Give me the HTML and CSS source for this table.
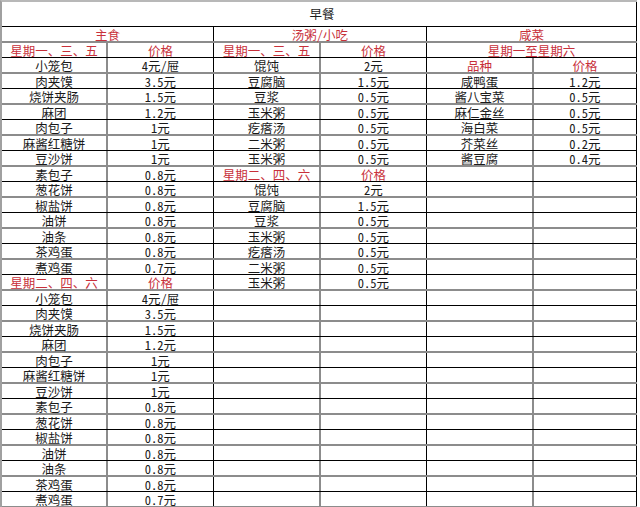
FILE: index.html
```html
<!DOCTYPE html>
<html lang="zh">
<head>
<meta charset="utf-8">
<title>早餐</title>
<link rel="stylesheet" href="styles.css">
</head>
<body>
<div class="sheet">
  <div class="title"><div class="cell end">早餐</div></div>

  <div class="row red"><div class="cell s2 end">主食</div><div class="cell s2 end">汤粥/小吃</div><div class="cell s2 end">咸菜</div></div>
  <div class="row red"><div class="cell">星期一、三、五</div><div class="cell">价格</div><div class="cell">星期一、三、五</div><div class="cell">价格</div><div class="cell s2 end">星期一至星期六</div></div>
  <div class="row"><div class="cell">小笼包</div><div class="cell">4元/屉</div><div class="cell">馄饨</div><div class="cell">2元</div><div class="cell r">品种</div><div class="cell r">价格</div></div>
  <div class="row"><div class="cell">肉夹馍</div><div class="cell">3.5元</div><div class="cell">豆腐脑</div><div class="cell">1.5元</div><div class="cell">咸鸭蛋</div><div class="cell">1.2元</div></div>
  <div class="row"><div class="cell">烧饼夹肠</div><div class="cell">1.5元</div><div class="cell">豆浆</div><div class="cell">0.5元</div><div class="cell">酱八宝菜</div><div class="cell">0.5元</div></div>
  <div class="row"><div class="cell">麻团</div><div class="cell">1.2元</div><div class="cell">玉米粥</div><div class="cell">0.5元</div><div class="cell">麻仁金丝</div><div class="cell">0.5元</div></div>
  <div class="row"><div class="cell">肉包子</div><div class="cell">1元</div><div class="cell">疙瘩汤</div><div class="cell">0.5元</div><div class="cell">海白菜</div><div class="cell">0.5元</div></div>
  <div class="row"><div class="cell">麻酱红糖饼</div><div class="cell">1元</div><div class="cell">二米粥</div><div class="cell">0.5元</div><div class="cell">芥菜丝</div><div class="cell">0.2元</div></div>
  <div class="row"><div class="cell">豆沙饼</div><div class="cell">1元</div><div class="cell">玉米粥</div><div class="cell">0.5元</div><div class="cell">酱豆腐</div><div class="cell">0.4元</div></div>
  <div class="row"><div class="cell">素包子</div><div class="cell">0.8元</div><div class="cell r">星期二、四、六</div><div class="cell r">价格</div><div class="cell"></div><div class="cell"></div></div>
  <div class="row"><div class="cell">葱花饼</div><div class="cell">0.8元</div><div class="cell">馄饨</div><div class="cell">2元</div><div class="cell"></div><div class="cell"></div></div>
  <div class="row"><div class="cell">椒盐饼</div><div class="cell">0.8元</div><div class="cell">豆腐脑</div><div class="cell">1.5元</div><div class="cell"></div><div class="cell"></div></div>
  <div class="row"><div class="cell">油饼</div><div class="cell">0.8元</div><div class="cell">豆浆</div><div class="cell">0.5元</div><div class="cell"></div><div class="cell"></div></div>
  <div class="row"><div class="cell">油条</div><div class="cell">0.8元</div><div class="cell">玉米粥</div><div class="cell">0.5元</div><div class="cell"></div><div class="cell"></div></div>
  <div class="row"><div class="cell">茶鸡蛋</div><div class="cell">0.8元</div><div class="cell">疙瘩汤</div><div class="cell">0.5元</div><div class="cell"></div><div class="cell"></div></div>
  <div class="row"><div class="cell">煮鸡蛋</div><div class="cell">0.7元</div><div class="cell">二米粥</div><div class="cell">0.5元</div><div class="cell"></div><div class="cell"></div></div>
  <div class="row"><div class="cell r">星期二、四、六</div><div class="cell r">价格</div><div class="cell">玉米粥</div><div class="cell">0.5元</div><div class="cell"></div><div class="cell"></div></div>
  <div class="row"><div class="cell">小笼包</div><div class="cell">4元/屉</div><div class="cell"></div><div class="cell"></div><div class="cell"></div><div class="cell"></div></div>
  <div class="row"><div class="cell">肉夹馍</div><div class="cell">3.5元</div><div class="cell"></div><div class="cell"></div><div class="cell"></div><div class="cell"></div></div>
  <div class="row"><div class="cell">烧饼夹肠</div><div class="cell">1.5元</div><div class="cell"></div><div class="cell"></div><div class="cell"></div><div class="cell"></div></div>
  <div class="row"><div class="cell">麻团</div><div class="cell">1.2元</div><div class="cell"></div><div class="cell"></div><div class="cell"></div><div class="cell"></div></div>
  <div class="row"><div class="cell">肉包子</div><div class="cell">1元</div><div class="cell"></div><div class="cell"></div><div class="cell"></div><div class="cell"></div></div>
  <div class="row"><div class="cell">麻酱红糖饼</div><div class="cell">1元</div><div class="cell"></div><div class="cell"></div><div class="cell"></div><div class="cell"></div></div>
  <div class="row"><div class="cell">豆沙饼</div><div class="cell">1元</div><div class="cell"></div><div class="cell"></div><div class="cell"></div><div class="cell"></div></div>
  <div class="row"><div class="cell">素包子</div><div class="cell">0.8元</div><div class="cell"></div><div class="cell"></div><div class="cell"></div><div class="cell"></div></div>
  <div class="row"><div class="cell">葱花饼</div><div class="cell">0.8元</div><div class="cell"></div><div class="cell"></div><div class="cell"></div><div class="cell"></div></div>
  <div class="row"><div class="cell">椒盐饼</div><div class="cell">0.8元</div><div class="cell"></div><div class="cell"></div><div class="cell"></div><div class="cell"></div></div>
  <div class="row"><div class="cell">油饼</div><div class="cell">0.8元</div><div class="cell"></div><div class="cell"></div><div class="cell"></div><div class="cell"></div></div>
  <div class="row"><div class="cell">油条</div><div class="cell">0.8元</div><div class="cell"></div><div class="cell"></div><div class="cell"></div><div class="cell"></div></div>
  <div class="row"><div class="cell">茶鸡蛋</div><div class="cell">0.8元</div><div class="cell"></div><div class="cell"></div><div class="cell"></div><div class="cell"></div></div>
  <div class="row"><div class="cell">煮鸡蛋</div><div class="cell">0.7元</div><div class="cell"></div><div class="cell"></div><div class="cell"></div><div class="cell"></div></div>
</div>
</body>
</html>
```

FILE: styles.css
```css
*, *::before, *::after { box-sizing: border-box; }

html, body {
  margin: 0;
  padding: 0;
  background: #fff;
}

body {
  font-family: "Noto Sans Mono CJK SC", "Noto Sans CJK SC", "DejaVu Sans", sans-serif;
  font-size: 12.5px;
  color: #1a1a1a;
  overflow: hidden;
}

.sheet {
  display: flex;
  flex-direction: column;
  width: 637px;
  border-top: 2px solid #b8b8b8;
  border-left: 2px solid #a0a0a0;
}

.title {
  display: grid;
  grid-template-columns: 1fr;
  height: 25px;
  border-bottom: 1px solid #000;
}

.title .cell {
  line-height: 24px;
  padding-top: 0;
  padding-left: 6px;
}

.row {
  display: grid;
  grid-template-columns: 106px 106px 107px 106px 107px 103px;
  height: 15px;
  border-bottom: 1px solid #000;
}

.row:nth-child(even) {
  height: 16px;
  border-bottom: 2px solid #8c8c8c;
}

.cell {
  border-right: 2px solid #8c8c8c;
  text-align: center;
  white-space: nowrap;
  line-height: 13px;
  padding-top: 1px;
}

.cell:nth-child(even),
.cell.end {
  border-right: 1px solid #000;
}

.s2 { grid-column: span 2; }

.red .cell,
.cell.r {
  color: #c8303a;
}
```
